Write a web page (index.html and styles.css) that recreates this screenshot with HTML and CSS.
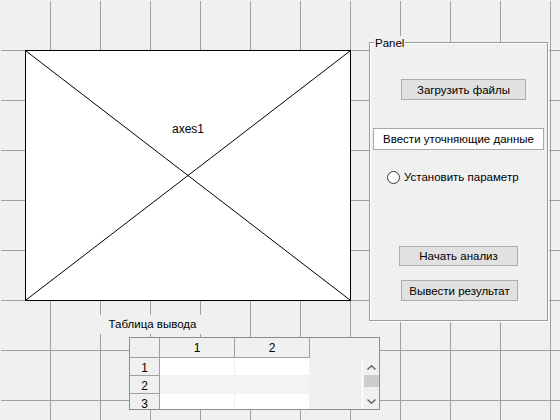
FILE: index.html
```html
<!DOCTYPE html>
<html lang="ru">
<head>
<meta charset="utf-8">
<title>GUIDE layout</title>
<link rel="stylesheet" href="styles.css">
</head>
<body>
<div class="canvas">
  <div class="axes">
    <svg class="axes-x" viewBox="0 0 324 249" preserveAspectRatio="none" width="324" height="249">
      <line x1="0" y1="0" x2="324" y2="249" stroke="#000" stroke-width="1"/>
      <line x1="0" y1="249" x2="324" y2="0" stroke="#000" stroke-width="1"/>
    </svg>
    <span class="axes-label">axes1</span>
  </div>

  <div class="panel">
    <span class="panel-title">Panel</span>
    <div class="btn btn-load">Загрузить файлы</div>
    <div class="edit">Ввести уточняющие данные</div>
    <div class="radio"><span class="radio-dot"></span><span>Установить параметр</span></div>
    <div class="btn btn-start">Начать анализ</div>
    <div class="btn btn-out">Вывести результат</div>
  </div>

  <div class="static-text">Таблица вывода</div>

  <div class="uitable">
    <div class="tgrid">
      <div class="hcell corner"></div>
      <div class="hcell">1</div>
      <div class="hcell">2</div>
      <div class="rhead">1</div>
      <div class="dcell odd"></div>
      <div class="dcell odd"></div>
      <div class="rhead">2</div>
      <div class="dcell even"></div>
      <div class="dcell even"></div>
      <div class="rhead">3</div>
      <div class="dcell odd"></div>
      <div class="dcell odd"></div>
    </div>
    <div class="vscroll">
      <svg class="arrow" viewBox="0 0 9 5" width="9" height="5"><polyline points="0.5,4.5 4.5,0.8 8.5,4.5" fill="none" stroke="#606060" stroke-width="1.4"/></svg>
      <div class="thumb"></div>
      <svg class="arrow down" viewBox="0 0 9 5" width="9" height="5"><polyline points="0.5,0.5 4.5,4.2 8.5,0.5" fill="none" stroke="#606060" stroke-width="1.4"/></svg>
    </div>
  </div>
</div>
</body>
</html>
```

FILE: styles.css
```css
html, body {
  margin: 0;
  padding: 0;
  background: #f0f0f0;
}

body {
  font-family: "Liberation Sans", Arial, sans-serif;
  font-size: 11.5px;
  color: #000;
}

.canvas {
  position: relative;
  width: 560px;
  height: 420px;
  box-sizing: border-box;
  overflow: hidden;
  border-top: 1px solid #f0f0f0;
  border-left: 1px solid #f0f0f0;
  background-color: #f0f0f0;
  background-image:
    linear-gradient(to right, #a0a0a0 1px, transparent 1px),
    linear-gradient(to bottom, #a0a0a0 1px, transparent 1px);
  background-size: 50px 50px;
  background-origin: border-box;
  background-clip: padding-box;
}

/* axes */
.axes {
  position: absolute;
  left: 24px;
  top: 49px;
  width: 326px;
  height: 251px;
  box-sizing: border-box;
  border: 1px solid #000;
  background: #fff;
}

.axes-x {
  display: block;
}

.axes-label {
  position: absolute;
  left: 0;
  right: 0;
  top: 71px;
  text-align: center;
  font-size: 12px;
  line-height: 14px;
}

/* panel */
.panel {
  position: absolute;
  left: 368px;
  top: 41px;
  width: 179px;
  height: 279px;
  box-sizing: border-box;
  border: 1px solid #9a9a9a;
  box-shadow: inset 1px 1px 0 #fff, 1px 1px 0 #fff;
  background: #f0f0f0;
}

.panel-title {
  position: absolute;
  left: 4px;
  top: -7px;
  padding: 0 1px;
  line-height: 14px;
  background: #f0f0f0;
}

.btn {
  position: absolute;
  box-sizing: border-box;
  border: 1px solid #adadad;
  background: #e1e1e1;
  display: flex;
  align-items: center;
  justify-content: center;
  white-space: nowrap;
}

.btn-load  { left: 31px; top: 36px;  width: 125px; height: 21px; }
.btn-start { left: 29px; top: 203px; width: 119px; height: 20px; }
.btn-out   { left: 31px; top: 237px; width: 117px; height: 21px; }

.edit {
  position: absolute;
  left: 3px;
  top: 85px;
  width: 171px;
  height: 22px;
  box-sizing: border-box;
  border: 1px solid #a8a8a8;
  background: #fff;
  display: flex;
  align-items: center;
  justify-content: center;
  white-space: nowrap;
}

.radio {
  position: absolute;
  left: 17px;
  top: 127px;
  height: 14px;
  display: flex;
  align-items: center;
  gap: 4px;
  white-space: nowrap;
}

.radio-dot {
  width: 13px;
  height: 13px;
  box-sizing: border-box;
  border: 1px solid #333;
  border-radius: 50%;
  background: #fff;
}

/* static text */
.static-text {
  position: absolute;
  left: 99px;
  top: 314px;
  width: 105px;
  height: 19px;
  background: #f0f0f0;
  text-align: center;
  line-height: 18px;
}

/* uitable */
.uitable {
  position: absolute;
  left: 128px;
  top: 336px;
  width: 251px;
  height: 73px;
  box-sizing: border-box;
  border: 1px solid #8c8c8c;
  background: #f0f0f0;
  overflow: hidden;
}

.tgrid {
  display: grid;
  grid-template-columns: 30px 75px 75px;
  grid-template-rows: 20px 18px 18px 18px;
  width: 180px;
}

.hcell {
  box-sizing: border-box;
  border-right: 1px solid #a0a0a0;
  border-bottom: 1px solid #a0a0a0;
  background: #f0f0f0;
  display: flex;
  align-items: center;
  justify-content: center;
  font-size: 12px;
  line-height: 14px;
}

.rhead {
  box-sizing: border-box;
  border-right: 1px solid #a0a0a0;
  border-bottom: 1px solid #a0a0a0;
  background: #f0f0f0;
  display: flex;
  align-items: center;
  justify-content: center;
  padding-top: 2px;
  font-size: 12px;
  line-height: 14px;
}

.dcell {
  box-sizing: border-box;
  border-right: 1px solid #f0f0f0;
  border-bottom: 1px solid #f0f0f0;
}

.dcell.odd  { background: #fff; }
.dcell.even { background: #f4f4f4; }

.vscroll {
  position: absolute;
  right: 0;
  top: 20px;
  bottom: 0;
  width: 17px;
  box-sizing: border-box;
  border-left: 1px solid #fff;
  background: #f0f0f0;
  display: flex;
  flex-direction: column;
  align-items: center;
}

.arrow {
  display: block;
  margin-top: 7px;
}

.thumb {
  width: 15px;
  height: 12px;
  margin-top: 5px;
  background: #cdcdcd;
}

.arrow.down {
  margin-top: 12px;
}
```
